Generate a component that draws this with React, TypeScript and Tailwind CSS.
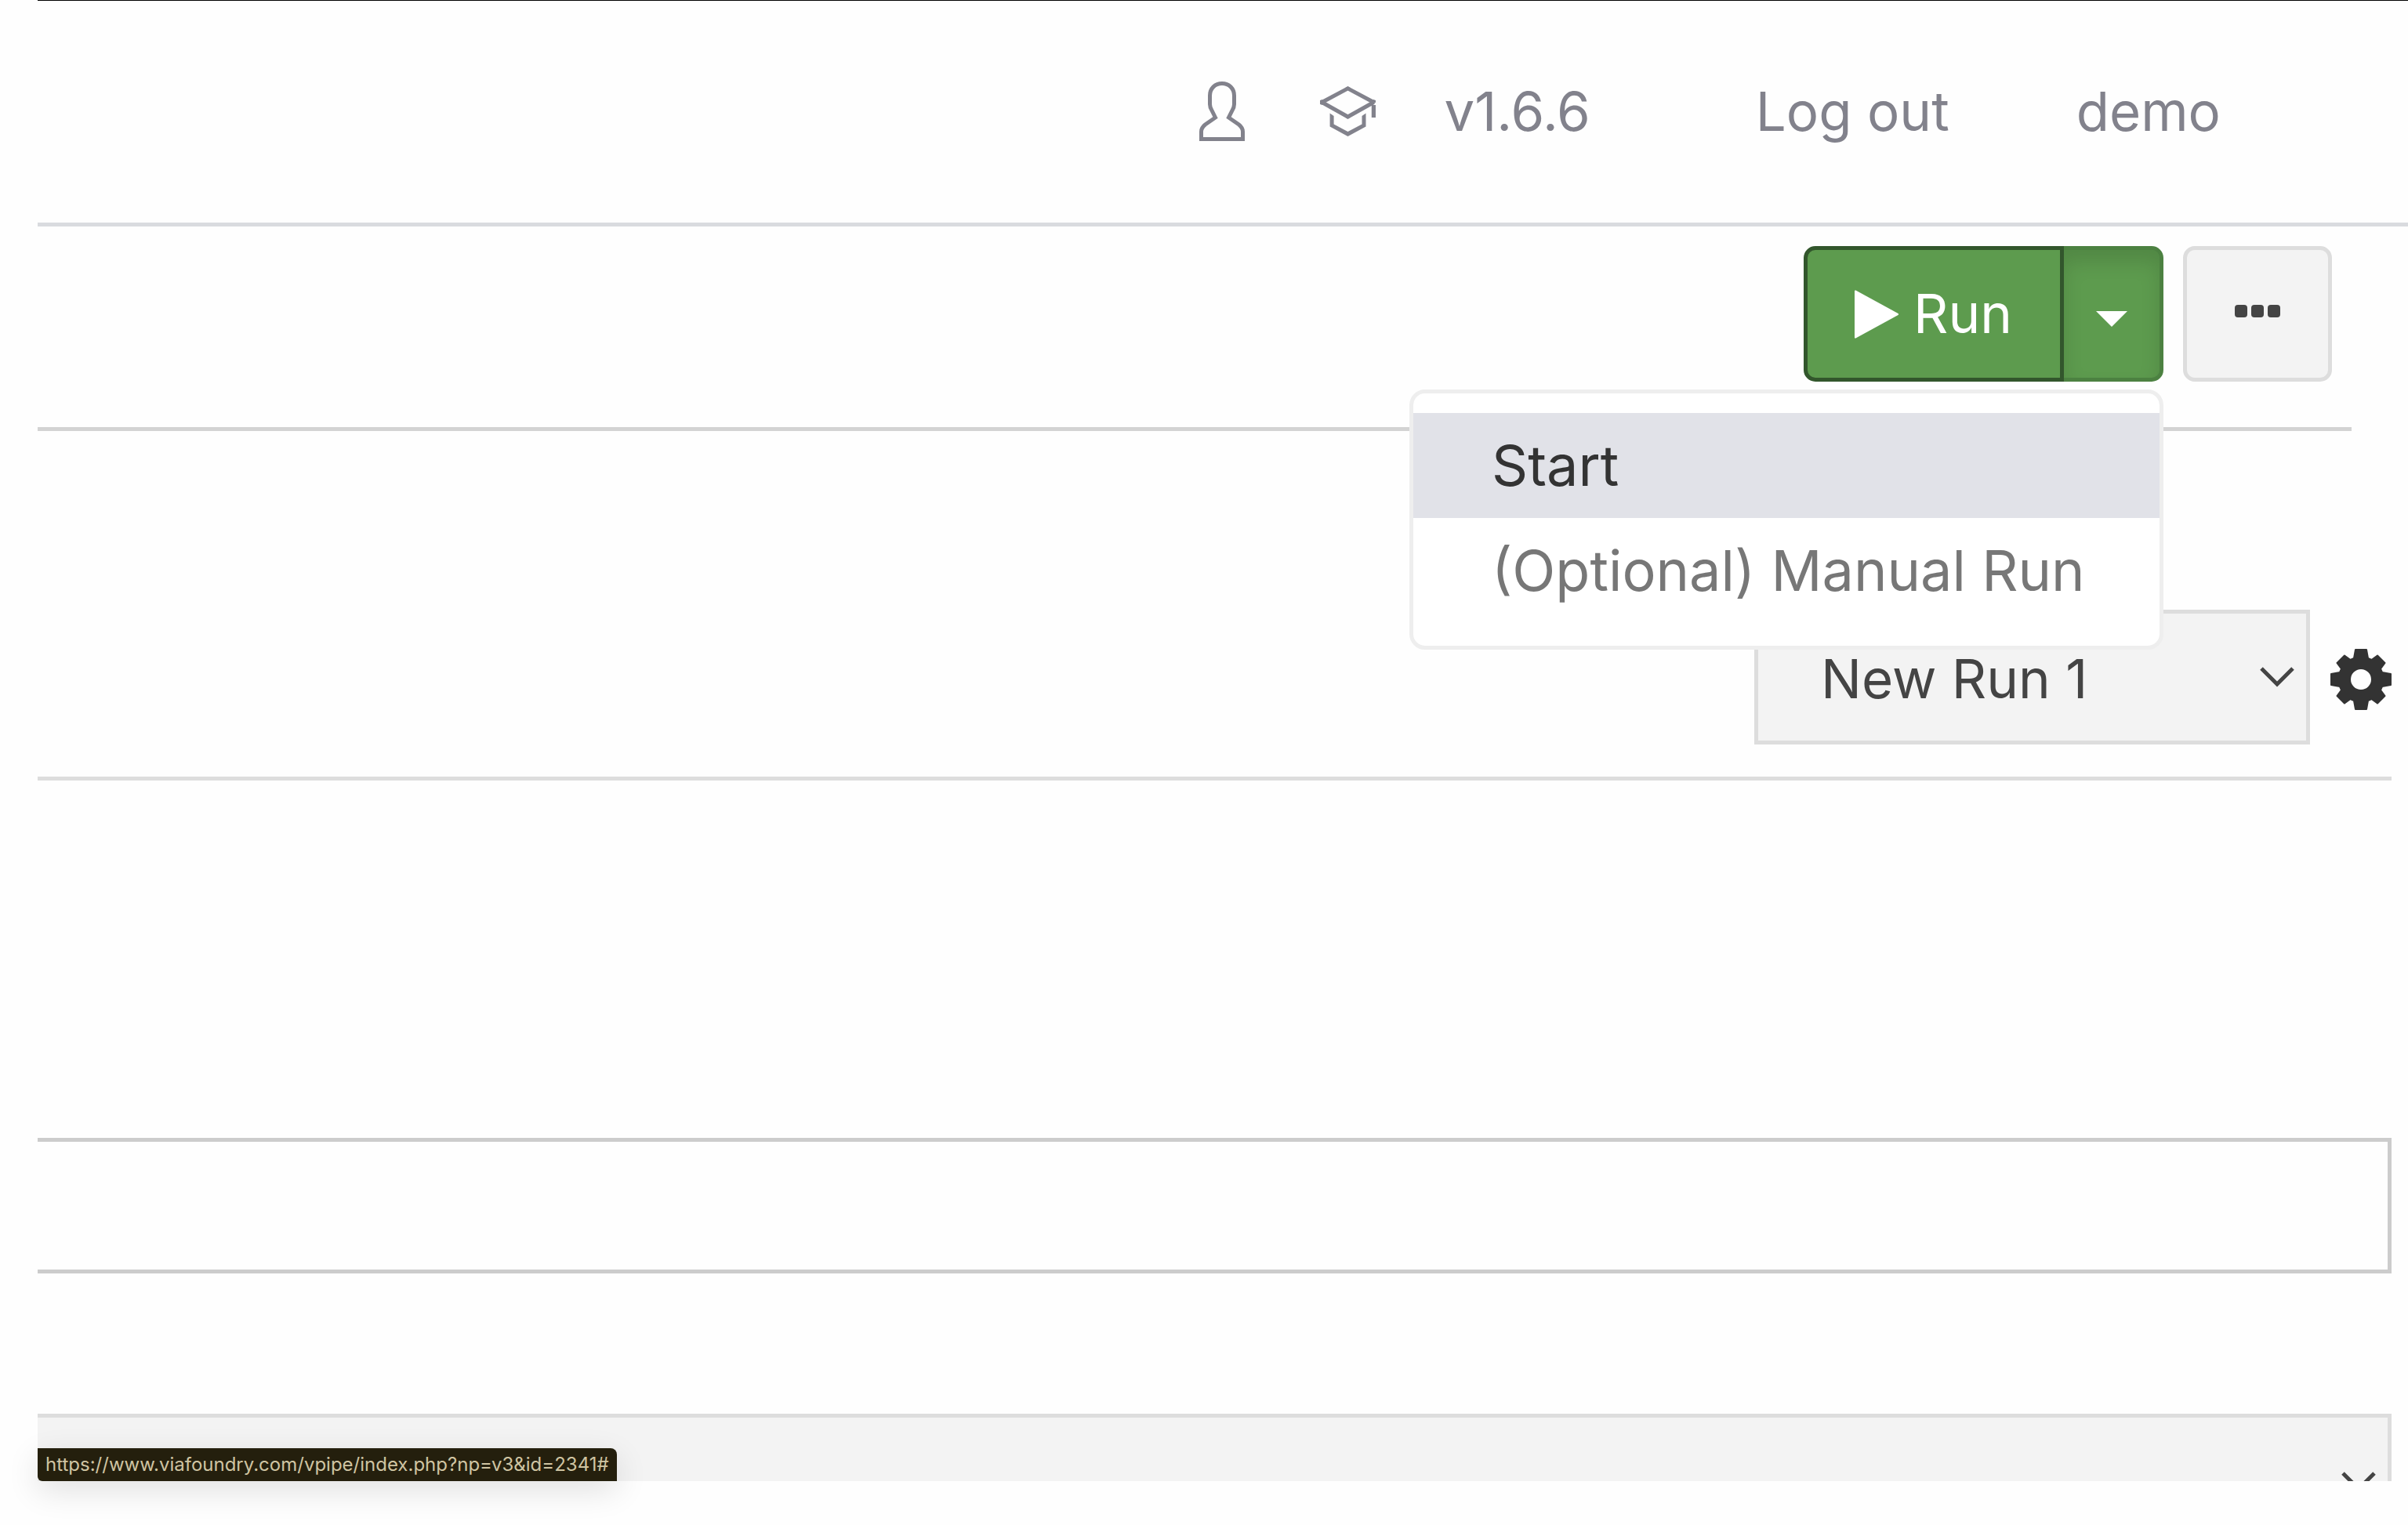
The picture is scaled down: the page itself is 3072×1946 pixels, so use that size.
import React from "react";

function UserIcon() {
  return (
    <svg width="58" height="76" viewBox="0 0 58 76" fill="none" stroke="currentColor" strokeWidth="5" aria-hidden="true">
      <path d="M20.5 46 L16 37 Q13.5 33 13.5 29 V18 C13.5 9 20 2.5 29 2.5 S44.5 9 44.5 18 V29 Q44.5 33 42 37 L37.5 46 L50.5 55 Q55.5 59 55.5 64 V73.5 H2.5 V64 Q2.5 59 7.5 55 Z" />
    </svg>
  );
}

function AcademyIcon() {
  return (
    <svg width="71" height="64" viewBox="0 0 71 64" aria-hidden="true">
      <path d="M2.5 20.5 L35.5 2.9 L68.5 20.5 L35.5 39 Z" fill="none" stroke="currentColor" strokeWidth="5" strokeLinejoin="bevel" />
      <path d="M32 2.2 L35.5 0 L39 2.2 V5 H32 Z M32 39.5 H39 L35.5 42 Z M65.8 21 H71 V40 H65.8 Z M0 18 L3 17 V24 L0 23 Z M71 18 L68 17 V24 H71 Z" fill="currentColor" />
      <path d="M12.6 34.5 L17.6 38 V48.5 L35.5 58 L53.5 48.5 V38 L58.5 34.5 V51.5 L35.5 64 L12.6 51.5 Z" fill="currentColor" />
    </svg>
  );
}

function GearIcon() {
  return (
    <svg width="78" height="78" viewBox="0 0 78 78" fill="#333333" stroke="#333333" strokeWidth="2" strokeLinejoin="round" aria-hidden="true">
      <path
        fillRule="evenodd"
        d="M32 1 H46 L48 12 L52.5 14 L60 8.5 L69.5 18 L64 25.5 L66 30 L77 32 V46 L66 48 L64 52.5 L69.5 60 L60 69.5 L52.5 64 L48 66 L46 77 H32 L30 66 L25.5 64 L18 69.5 L8.5 60 L14 52.5 L12 48 L1 46 V32 L12 30 L14 25.5 L8.5 18 L18 8.5 L25.5 14 L30 12 Z M39 25 A14 14 0 1 0 39 53 A14 14 0 1 0 39 25 Z"
      />
    </svg>
  );
}

function Chevron() {
  return (
    <svg className="pointer-events-none absolute top-1/2 right-5 -translate-y-1/2" width="44" height="26" viewBox="0 0 44 26" fill="none" stroke="#444444" strokeWidth="5" aria-hidden="true">
      <path d="M2 2 L22 22 L42 2" />
    </svg>
  );
}

export default function App() {
  return (
    <div className="relative flex h-screen flex-col overflow-hidden bg-[#fefefe] pb-14 pl-12 font-['Inter',sans-serif] text-[69px] leading-none">
      <header className="flex shrink-0 items-center justify-end border-t border-b-5 border-t-black border-b-[#d9dbdf] pt-[91px] pr-[239px] pb-[92px] text-[#82828c]">
        <nav className="flex h-[100px] items-center">
          <a href="#profile" aria-label="Profile" className="mr-24"><UserIcon /></a>
          <a href="#academy" aria-label="Academy" className="mr-[87px]"><AcademyIcon /></a>
          <a href="#version" className="mr-[211px]">v1.6.6</a>
          <a href="#logout" className="mr-[162px]">Log out</a>
          <a href="#account">demo</a>
        </nav>
      </header>

      <main className="min-h-0 flex-1 overflow-hidden">
        <div className="mr-[72px] flex justify-end gap-[25px] border-b-5 border-[#d3d3d3] pt-[25px] pr-[25px] pb-[58px]">
          <div className="relative flex h-[173px]">
            <button className="flex w-[332px] items-center rounded-l-[15px] border-5 border-[#32562c] bg-[#5d9b4e] pl-[60px] text-white">
              <svg width="57" height="62" viewBox="0 0 57 62" fill="white" className="mr-[18px]" aria-hidden="true">
                <path d="M0 1.5 Q0 0 1.5 .5 L55.5 30 Q57 31 55.5 32 L1.5 61.5 Q0 62 0 60.5 Z" />
              </svg>
              Run
            </button>
            <button aria-label="Run options" aria-expanded="true" className="flex w-[127px] items-center justify-center rounded-r-[15px] border-5 border-l-0 border-[#4c8141] bg-[#5d9b4e] pt-3 shadow-[inset_0_15px_25px_rgba(0,0,0,0.125)]">
              <svg width="40" height="20" viewBox="0 0 40 20" fill="white" aria-hidden="true"><path d="M0 0 H40 L20 20 Z" /></svg>
            </button>
            <ul role="menu" className="absolute top-full right-0 z-10 mt-[10px] w-[962px] rounded-[20px] border-5 border-[#eeeeee] bg-white pt-[25px] pb-[29px] text-[72px]">
              <li role="none"><button role="menuitem" className="flex h-[134px] w-full items-center bg-[#e1e2e8] pl-[100px] text-[#333333]">Start</button></li>
              <li role="none"><button role="menuitem" className="flex h-[134px] w-full items-center pl-[100px] whitespace-nowrap text-[#777777]">(Optional) Manual Run</button></li>
            </ul>
          </div>
          <button aria-label="More" className="flex w-[190px] items-center justify-center rounded-[15px] border-5 border-[#dddddd] bg-[#f3f3f3] pb-2">
            <svg width="58" height="16" viewBox="0 0 58 16" fill="#444444" aria-hidden="true">
              <rect width="16" height="16" rx="4" />
              <rect x="21" width="16" height="16" rx="4" />
              <rect x="42" width="16" height="16" rx="4" />
            </svg>
          </button>
        </div>

        <div className="mr-[21px] flex items-center justify-end gap-[26px] border-b-5 border-[#dddddd] pt-[228px] pb-[41px]">
          <div className="relative w-[709px]">
            <select aria-label="Run" className="h-[172px] w-full appearance-none border-5 border-[#dddddd] bg-[#f3f3f3] pt-1 pl-20 text-[#444444]">
              <option>New Run 1</option>
            </select>
            <Chevron />
          </div>
          <button aria-label="Run settings" className="pt-1.5"><GearIcon /></button>
        </div>

        <div className="mt-[456px] mr-[21px]">
          <input type="text" aria-label="Value" className="block h-[173px] w-full border-5 border-l-0 border-[#cccccc] bg-[#fefefe] px-10" />
        </div>

        <div className="relative mt-[179px] mr-[21px]">
          <select aria-label="Option" className="block h-[173px] w-full appearance-none border-5 border-l-0 border-[#dddddd] bg-[#f3f3f3]" />
          <Chevron />
        </div>
      </main>

      <div className="absolute bottom-14 left-12 flex h-[42px] items-center rounded-tr-[8px] rounded-bl-[6px] bg-[#241f0d] pr-[10px] pl-[10px] text-[24px] text-[#cfc4a2] shadow-[0_12px_40px_rgba(0,0,0,0.12)]">
        https://www.viafoundry.com/vpipe/index.php?np=v3&amp;id=2341#
      </div>
    </div>
  );
}
